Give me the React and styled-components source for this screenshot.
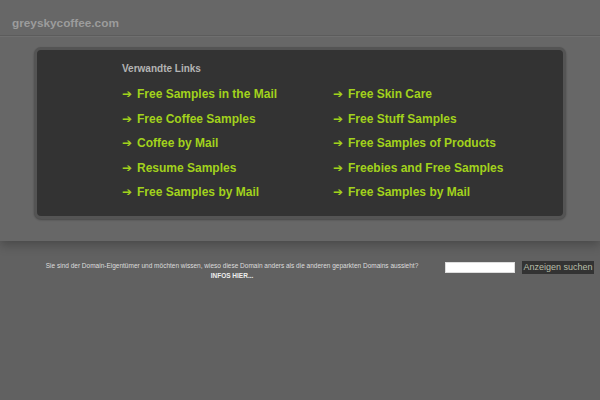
import styled, { createGlobalStyle } from "styled-components";

const GlobalStyle = createGlobalStyle`
  html, body {
    margin: 0;
    padding: 0;
    background: #616161;
    font-family: "Liberation Sans", Arial, sans-serif;
  }
`;

const leftLinks = [
  "Free Samples in the Mail",
  "Free Coffee Samples",
  "Coffee by Mail",
  "Resume Samples",
  "Free Samples by Mail",
];

const rightLinks = [
  "Free Skin Care",
  "Free Stuff Samples",
  "Free Samples of Products",
  "Freebies and Free Samples",
  "Free Samples by Mail",
];

function App() {
  return (
    <>
      <GlobalStyle />
      <Page>
        <Top>
          <Header>
            <Domain>greyskycoffee.com</Domain>
          </Header>
          <Panel>
            <PanelTitle>Verwandte Links</PanelTitle>
            <LinkGrid>
              <LinkColumn>
                {leftLinks.map((text) => (
                  <LinkItem key={text} href="#">
                    <Arrow>➔</Arrow>
                    {text}
                  </LinkItem>
                ))}
              </LinkColumn>
              <LinkColumn>
                {rightLinks.map((text) => (
                  <LinkItem key={text} href="#">
                    <Arrow>➔</Arrow>
                    {text}
                  </LinkItem>
                ))}
              </LinkColumn>
            </LinkGrid>
          </Panel>
        </Top>
        <Footer>
          <OwnerNote>
            <p>
              Sie sind der Domain-Eigentümer und möchten wissen, wieso diese
              Domain anders als die anderen geparkten Domains aussieht?
            </p>
            <InfoLink href="#">INFOS HIER...</InfoLink>
          </OwnerNote>
          <SearchForm onSubmit={(e) => e.preventDefault()}>
            <SearchInput type="text" />
            <SearchButton type="submit">Anzeigen suchen</SearchButton>
          </SearchForm>
        </Footer>
      </Page>
    </>
  );
}

const Page = styled.div`
  width: 600px;
  min-height: 400px;
  background: #616161;
`;

const Top = styled.div`
  background: #676767;
  height: 241px;
  box-sizing: border-box;
  box-shadow: 0 4px 10px rgba(0, 0, 0, 0.25);
  position: relative;
`;

const Header = styled.div`
  height: 36px;
  box-sizing: border-box;
  padding: 10px 0 0 12px;
  display: flex;
  align-items: center;
  border-bottom: 1px solid #5c5c5c;
  box-shadow: 0 1px 0 #6f6f6f;
`;

const Domain = styled.h1`
  margin: 0;
  font-size: 11.8px;
  font-weight: bold;
  color: #9c9c9c;
`;

const Panel = styled.div`
  width: 532px;
  height: 172px;
  margin: 11px auto 0;
  box-sizing: border-box;
  background: #333333;
  border: 3px solid #545454;
  border-radius: 7px;
  box-shadow: 0 1px 2px rgba(0, 0, 0, 0.3);
  padding: 13px 0 0 85px;
`;

const PanelTitle = styled.div`
  font-size: 10px;
  font-weight: bold;
  color: #b4b4b4;
  height: 12px;
  line-height: 12px;
`;

const LinkGrid = styled.div`
  display: grid;
  grid-template-columns: 211px 1fr;
  margin-top: 7px;
`;

const LinkColumn = styled.div`
  display: flex;
  flex-direction: column;
`;

const LinkItem = styled.a`
  display: flex;
  align-items: center;
  height: 24.5px;
  font-size: 12px;
  font-weight: bold;
  color: #a2d21c;
  text-decoration: none;
  white-space: nowrap;
`;

const Arrow = styled.span`
  font-family: "DejaVu Sans", sans-serif;
  font-weight: bold;
  font-size: 12px;
  width: 15px;
`;

const Footer = styled.div`
  display: flex;
  align-items: flex-start;
  padding-top: 20px;
`;

const OwnerNote = styled.div`
  width: 440px;
  padding-left: 24px;
  box-sizing: border-box;
  text-align: center;
  color: #dddddd;
  font-size: 6.5px;

  p {
    margin: 0;
    line-height: 10px;
  }
`;

const InfoLink = styled.a`
  display: block;
  font-weight: bold;
  color: #eeeeee;
  text-decoration: none;
  line-height: 10px;
`;

const SearchForm = styled.form`
  display: flex;
  align-items: center;
  margin: 0 0 0 5px;
  gap: 7px;
`;

const SearchInput = styled.input`
  width: 70px;
  height: 11px;
  box-sizing: border-box;
  border: 1px solid #dddddd;
  background: #ffffff;
  padding: 0;
  margin: 0;
`;

const SearchButton = styled.button`
  width: 72px;
  height: 13px;
  box-sizing: border-box;
  background: #333333;
  border: none;
  color: #b8bfa8;
  font-family: "Liberation Sans", Arial, sans-serif;
  font-size: 9px;
  padding: 0;
  line-height: 13px;
`;

export default App;
